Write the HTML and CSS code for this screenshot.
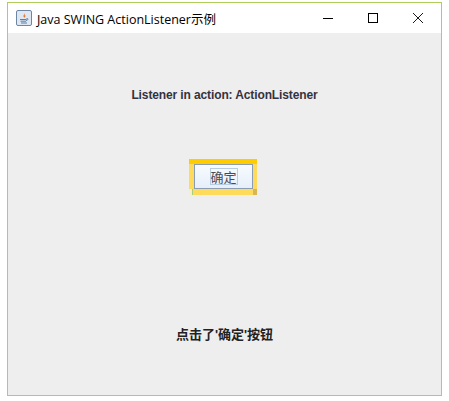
FILE: index.html
```html
<!DOCTYPE html>
<html lang="zh">
<head>
<meta charset="utf-8">
<title>Java SWING ActionListener示例</title>
<link rel="stylesheet" href="styles.css">
</head>
<body>
<div class="window">
  <header class="titlebar">
    <svg class="app-icon" width="16" height="16" viewBox="0 0 16 16">
      <rect x="0.5" y="0.5" width="15" height="15" rx="1.5" fill="#dfe8f2" stroke="#6d87a3"/>
      <path d="M8.5 2.500c1 1.500-1.500 2.500-1 4 .2.700.8 1 1 1.500-.2-1 1.500-1.500 1.300-3-.2 1-1 1-1 .2 0-1 .2-1.700-.3-2.700z" fill="#e8752a"/>
      <path d="M4 9.500h6.500M4.500 11.200h5.500M5 13h6" stroke="#5a7fa5" fill="none"/>
      <path d="M10.500 8.500c2-.5 2 1.800-.5 2" stroke="#5a7fa5" fill="none"/>
    </svg>
    <span class="title">Java SWING ActionListener示例</span>
    <div class="controls">
      <svg class="ctl" width="10" height="10" viewBox="0 0 10 10"><path d="M0 5.500h10" stroke="#000"/></svg>
      <svg class="ctl" width="10" height="10" viewBox="0 0 10 10"><rect x="0.500" y="0.500" width="9" height="9" fill="none" stroke="#000"/></svg>
      <svg class="ctl" width="10" height="10" viewBox="0 0 10 10"><path d="M0 0l10 10M10 0L0 10" stroke="#000" stroke-width="0.900"/></svg>
    </div>
  </header>
  <main class="content">
    <div class="heading">Listener in action: ActionListener</div>
    <div class="button-wrap">
      <div class="glow">
        <button class="btn" type="button"><span class="btn-label">确定</span></button>
        <div class="glow-foot">
          <span class="foot-notch"></span>
          <span class="foot-strip"></span>
          <span class="foot-corner"></span>
        </div>
      </div>
    </div>
    <div class="status">点击了'确定'按钮</div>
  </main>
</div>
</body>
</html>
```
FILE: styles.css
```css
html, body { margin: 0; padding: 0; background: #fff; }
body { width: 449px; height: 401px; overflow: hidden; }
.window {
  box-sizing: border-box;
  width: 435px;
  height: 394px;
  margin: 2px 0 0 7px;
  border: 1px solid #b0cf5a;
  display: flex;
  flex-direction: column;
  background: #eeeeee;
}
.titlebar {
  height: 30px;
  flex: none;
  background: #fff;
  display: flex;
  align-items: center;
  padding-left: 8px;
  color: #000;
}
.app-icon { flex: none; margin-right: 5px; }
.title { flex: 1; font-family: "Open Sans", "Noto Sans CJK SC", sans-serif; font-size: 12.5px; white-space: nowrap; }
.controls { display: flex; gap: 35px; padding-right: 18px; }
.content {
  flex: 1;
  display: flex;
  flex-direction: column;
  align-items: center;
  font: bold 12px "Liberation Sans", "Noto Sans CJK SC", sans-serif;
  color: #333340;
}
.heading { margin-top: 54px; height: 16px; line-height: 16px; letter-spacing: -0.12px; }
.button-wrap { margin-top: 56px; margin-right: 3px; }
.glow {
  width: 68px;
  height: 36px;
  box-sizing: border-box;
  padding-top: 5px;
  background: linear-gradient(#ffcc00 0 5px, #ffdb5c 5px);
  display: flex;
  flex-direction: column;
}
.btn {
  display: flex;
  align-items: center;
  justify-content: center;
  flex: none;
  box-sizing: border-box;
  width: 59px;
  height: 25px;
  margin-left: 5px;
  padding: 0;
  border: 1px solid #8a9db5;
  background: linear-gradient(#f8fbff, #e6effa);
  font: 13px "Noto Sans CJK SC", sans-serif;
  color: #4a4a55;
}
.btn-label {
  box-sizing: border-box;
  width: 28px;
  height: 17px;
  line-height: 15px;
  border: 1px solid #b8cde0;
  text-align: center;
  white-space: nowrap;
}
.glow-foot { flex: 1; display: flex; }
.foot-notch {
  width: 3px;
  background: #f7efc8;
  border-right: 1px solid #a9cf7c;
}
.foot-strip { flex: 1; background: #ffdb5c; }
.foot-corner { width: 4px; background: #d9b655; }
.status { margin-top: 132px; height: 16px; line-height: 16px; color: #222; font-size: 13px; }
```
